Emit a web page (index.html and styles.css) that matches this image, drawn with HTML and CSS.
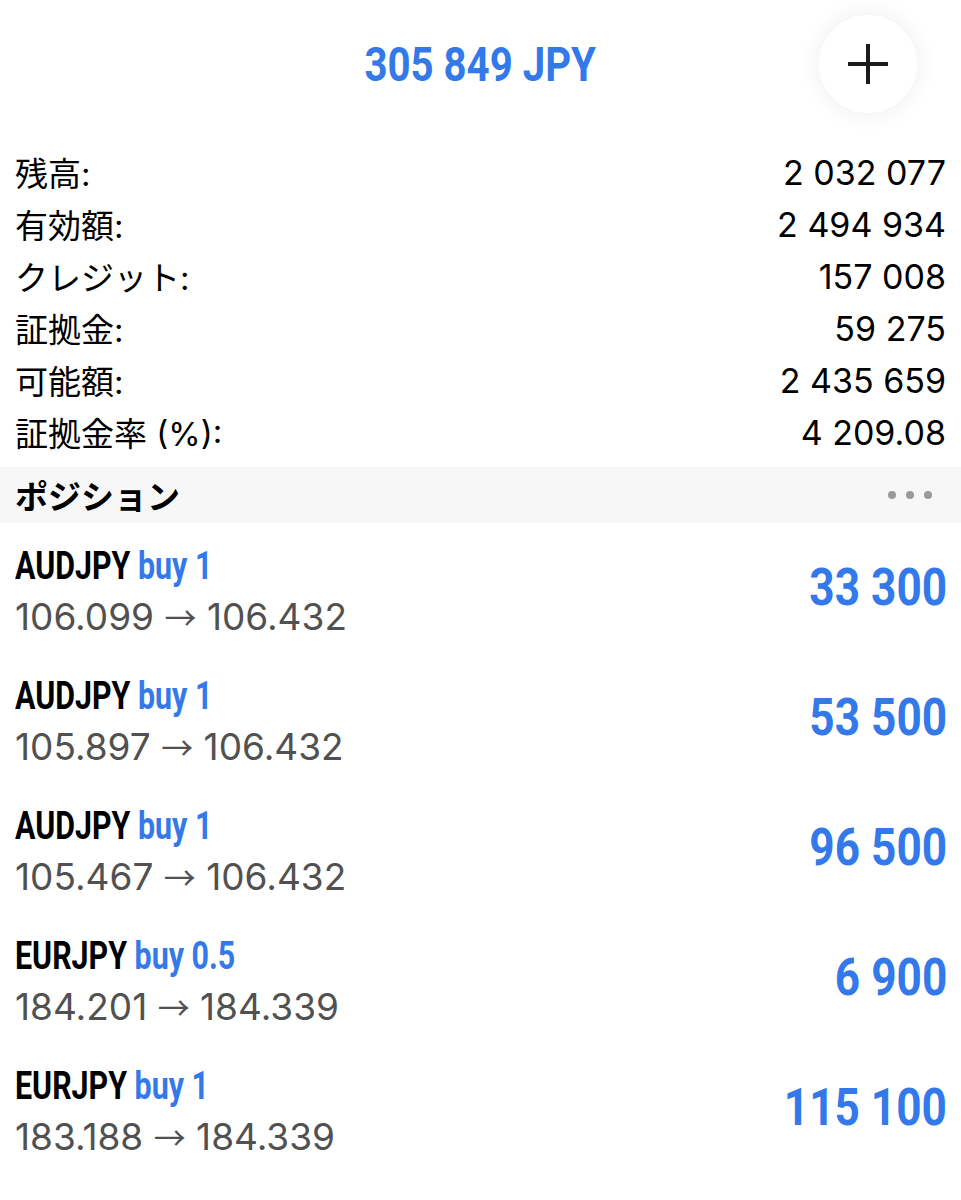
FILE: index.html
```html
<!DOCTYPE html>
<html lang="ja">
<head>
<meta charset="utf-8">
<link rel="stylesheet" href="styles.css">
</head>
<body>
<div class="screen">
  <header class="top">
    <div class="spacer"></div>
    <div class="equity"><span class="cond">305 849 JPY</span></div>
    <div class="plus-wrap">
      <button class="plus" aria-label="add">
        <svg width="42" height="42" viewBox="0 0 42 42"><path d="M21 1V41M1 21H41" stroke="#1c1c1c" stroke-width="4" fill="none"/></svg>
      </button>
    </div>
  </header>

  <section class="info">
    <div class="row"><span class="lbl">残高:</span><span class="val">2 032 077</span></div>
    <div class="row"><span class="lbl">有効額:</span><span class="val">2 494 934</span></div>
    <div class="row"><span class="lbl">クレジット:</span><span class="val">157 008</span></div>
    <div class="row"><span class="lbl">証拠金:</span><span class="val">59 275</span></div>
    <div class="row"><span class="lbl">可能額:</span><span class="val">2 435 659</span></div>
    <div class="row"><span class="lbl">証拠金率 (%):</span><span class="val">4 209.08</span></div>
  </section>

  <div class="band">
    <span class="band-title">ポジション</span>
    <span class="dots"><i></i><i></i><i></i></span>
  </div>

  <section class="positions">
    <div class="pos">
      <div class="pos-left">
        <div class="sym"><span class="cond sym-c">AUDJPY <b>buy 1</b></span></div>
        <div class="price">106.099 <span class="arr">→</span> 106.432</div>
      </div>
      <div class="profit"><span class="cond pr-c">33 300</span></div>
    </div>
    <div class="pos">
      <div class="pos-left">
        <div class="sym"><span class="cond sym-c">AUDJPY <b>buy 1</b></span></div>
        <div class="price">105.897 <span class="arr">→</span> 106.432</div>
      </div>
      <div class="profit"><span class="cond pr-c">53 500</span></div>
    </div>
    <div class="pos">
      <div class="pos-left">
        <div class="sym"><span class="cond sym-c">AUDJPY <b>buy 1</b></span></div>
        <div class="price">105.467 <span class="arr">→</span> 106.432</div>
      </div>
      <div class="profit"><span class="cond pr-c">96 500</span></div>
    </div>
    <div class="pos">
      <div class="pos-left">
        <div class="sym"><span class="cond sym-c">EURJPY <b>buy 0.5</b></span></div>
        <div class="price">184.201 <span class="arr">→</span> 184.339</div>
      </div>
      <div class="profit"><span class="cond pr-c">6 900</span></div>
    </div>
    <div class="pos">
      <div class="pos-left">
        <div class="sym"><span class="cond sym-c">EURJPY <b>buy 1</b></span></div>
        <div class="price">183.188 <span class="arr">→</span> 184.339</div>
      </div>
      <div class="profit"><span class="cond pr-c">115 100</span></div>
    </div>
  </section>
</div>
</body>
</html>
```
FILE: styles.css
```css
html, body {
  margin: 0;
  padding: 0;
  background: #ffffff;
}
body {
  font-family: Inter, "Noto Sans CJK JP", sans-serif;
  color: #000000;
}
.screen {
  width: 961px;
}
.cond {
  display: inline-block;
  font-family: Roboto, "Liberation Sans", sans-serif;
  font-weight: 700;
  white-space: nowrap;
}
.top {
  height: 128px;
  display: grid;
  grid-template-columns: 1fr auto 1fr;
  align-items: center;
}
.equity {
  color: #3479e9;
  font-size: 49px;
  line-height: 56px;
  text-align: center;
}
.equity .cond {
  transform: scaleX(0.82);
  transform-origin: center;
}
.plus-wrap {
  display: flex;
  justify-content: flex-end;
  padding-right: 44px;
}
.plus {
  width: 98px;
  height: 98px;
  border-radius: 50%;
  border: none;
  background: #ffffff;
  box-shadow: 0 0 24px rgba(0, 0, 0, 0.07);
  display: flex;
  align-items: center;
  justify-content: center;
  padding: 0;
}
.info {
  padding: 18px 15px 0 15px;
  margin-bottom: 9px;
}
.row {
  height: 52px;
  display: flex;
  align-items: center;
  justify-content: space-between;
}
.lbl {
  font-family: Inter, "Noto Sans CJK JP", sans-serif;
  font-size: 33px;
}
.val {
  font-family: Inter, sans-serif;
  font-size: 34px;
}
.band {
  height: 56px;
  background: #f7f7f7;
  display: flex;
  align-items: center;
  justify-content: space-between;
  padding: 0 29px 0 15px;
}
.band-title {
  font-size: 33px;
  font-weight: 700;
  font-family: "Noto Sans CJK JP", sans-serif;
}
.dots {
  display: flex;
  gap: 10px;
}
.dots i {
  width: 8px;
  height: 8px;
  border-radius: 50%;
  background: #9a9a9a;
}
.positions {
  padding: 0 14px 0 15px;
}
.pos {
  display: flex;
  justify-content: space-between;
  padding: 19px 0 9px;
}
.sym {
  height: 46px;
  line-height: 46px;
  font-size: 38px;
  color: #000000;
}
.sym-c {
  transform: scaleX(0.8);
  transform-origin: left center;
}
.sym b {
  color: #3479e9;
  font-weight: 700;
}
.price {
  height: 56px;
  line-height: 56px;
  font-size: 37px;
  color: #515151;
  font-family: Inter, "Liberation Sans", sans-serif;
}
.arr {
  font-family: "Noto Sans CJK JP", sans-serif;
  font-size: 32px;
}
.profit {
  font-size: 52px;
  line-height: 90px;
  height: 90px;
  color: #3479e9;
}
.pr-c {
  transform: scaleX(0.85);
  transform-origin: right center;
}
```
